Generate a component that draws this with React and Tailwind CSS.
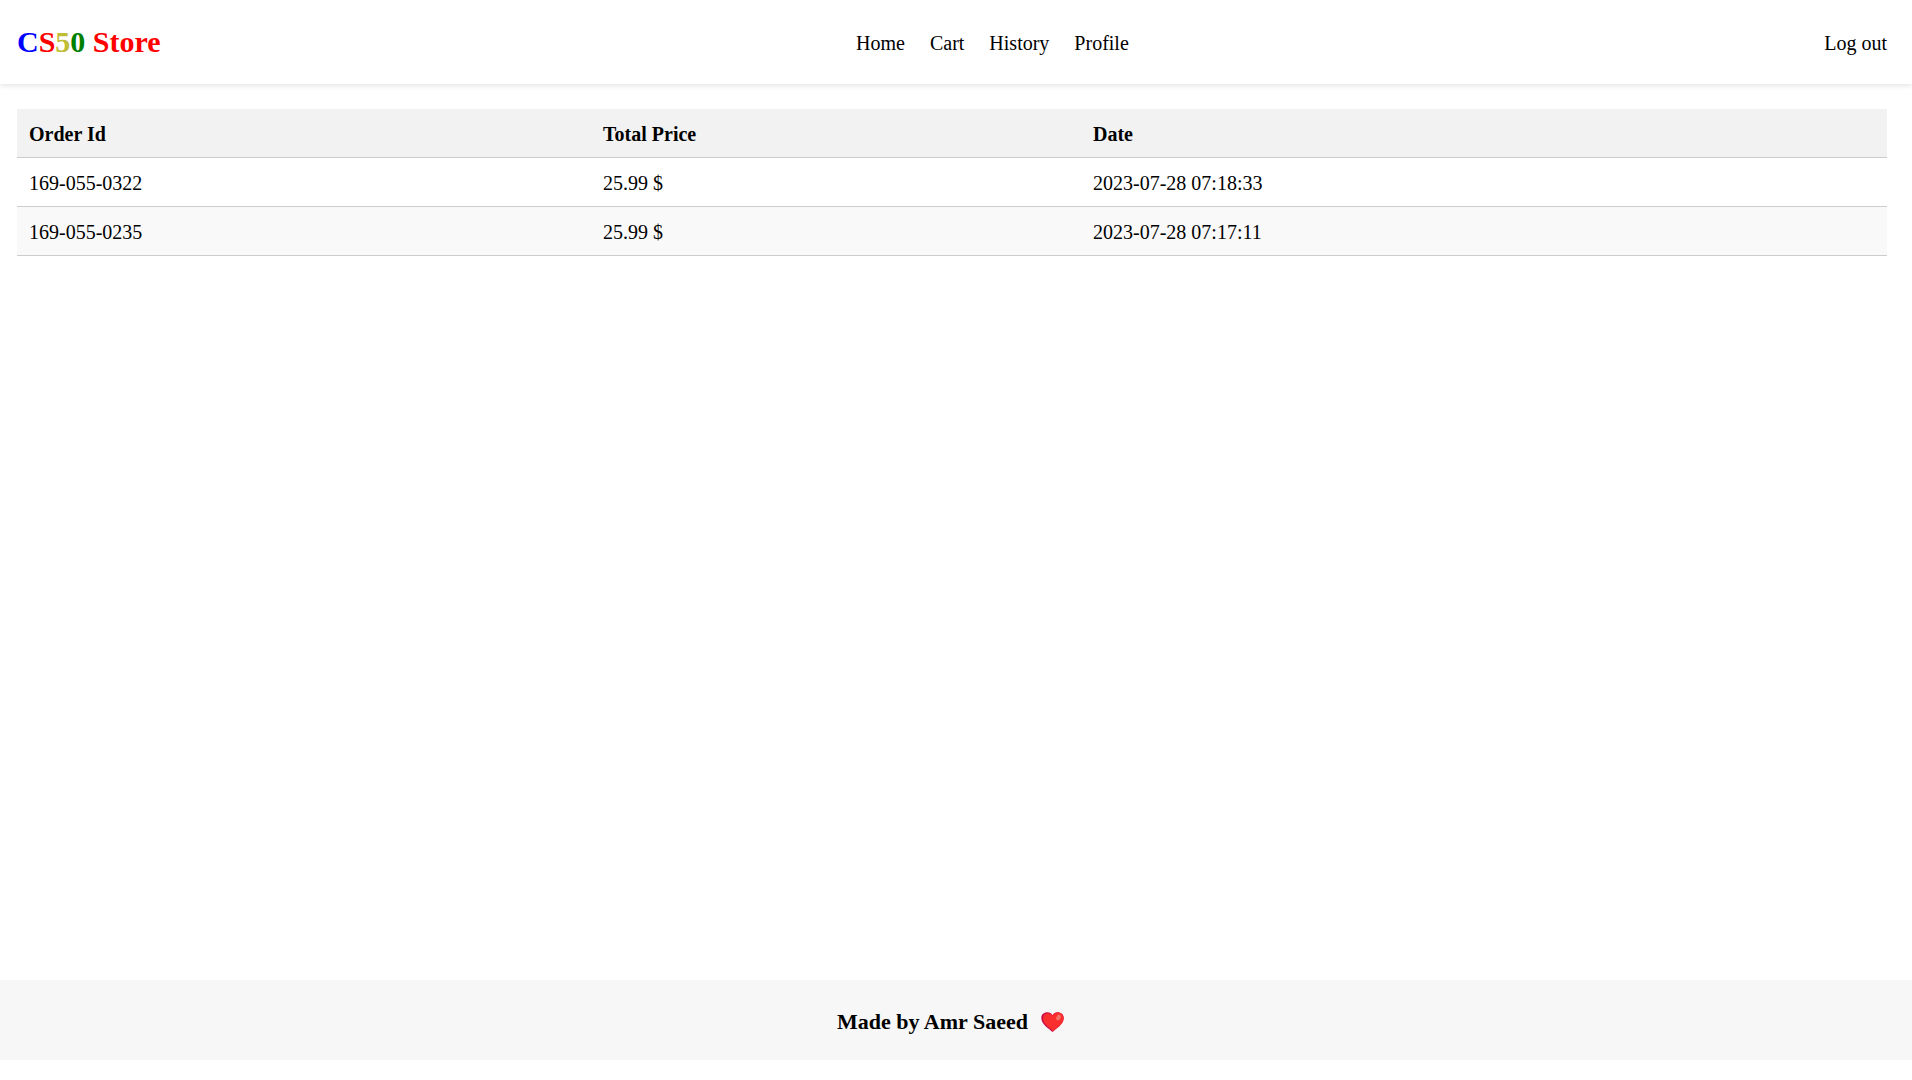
const links = ["Home", "Cart", "History", "Profile"];
const orders = [
  ["169-055-0322", "25.99 $", "2023-07-28 07:18:33"],
  ["169-055-0235", "25.99 $", "2023-07-28 07:17:11"],
];

function Heart() {
  return (
    <svg viewBox="0 0 23 20" className="mr-[11px] h-5 w-[23px]" role="img" aria-label="heart">
      <path d="M11.500 20C8 16.500 0.300 12.500 0.300 6C0.300 2.500 3 0.300 6.300 0.300C8.800 0.300 10.700 1.400 11.500 3.200C12.300 1.400 14.200 0.300 16.700 0.300C20 0.300 22.700 2.500 22.700 6C22.700 12.500 15 16.500 11.500 20Z" fill="#ca0b4a" />
      <path d="M12.200 19.200C8.500 15.500 2 12 2 6.300C2 3.200 4.300 1.300 7 1.300C9.300 1.300 10.800 2.400 11.500 4C12.300 1.600 14.200 0.500 16.700 0.500C20 0.500 22.700 2.700 22.700 6.200C22.700 12.300 15.700 15.700 12.200 19.200Z" fill="#f92f2f" />
      <ellipse cx="17.500" cy="5.500" rx="2" ry="3" transform="rotate(30 17.500 5.500)" fill="#f37366" />
    </svg>
  );
}

export default function App() {
  return (
    <div className="flex min-h-screen flex-col bg-white font-['Liberation_Serif',serif] text-xl text-black">
      <header className="flex h-[84px] items-center justify-between pl-[17px] pr-[25px] pt-px shadow-[0_2px_5px_rgba(0,0,0,0.1)]">
        <a href="#" className="pb-0.5 text-3xl font-bold text-[#ff0000]">
          <span className="text-[#0000ff]">C</span>S<span className="text-[#c1bd37]">5</span>
          <span className="text-[#008000]">0</span> Store
        </a>
        <nav className="flex gap-[25px]">
          {links.map((l) => <a key={l} href="#">{l}</a>)}
        </nav>
        <a href="#">Log out</a>
      </header>
      <main className="grow pl-[17px] pr-[25px] pt-[25px]">
        <table className="w-full border-separate border-spacing-0 text-left">
          <thead>
            <tr className="bg-[#f2f2f2]">
              <th className="h-[49px] w-[30.7%] border-b border-[#cccccc] px-3 pt-0.5">Order Id</th>
              <th className="w-[26.2%] border-b border-[#cccccc] px-3 pt-0.5">Total Price</th>
              <th className="border-b border-[#cccccc] px-3 pt-0.5">Date</th>
            </tr>
          </thead>
          <tbody>
            {orders.map((o) => (
              <tr key={o[0]} className="even:bg-[#f9f9f9]">
                {o.map((c) => <td key={c} className="h-[49px] border-b border-[#cccccc] px-3 pt-0.5">{c}</td>)}
              </tr>
            ))}
          </tbody>
        </table>
      </main>
      <footer className="mb-5 flex h-20 items-center justify-center gap-[13px] bg-[#f7f7f7] pt-1 text-[22px] font-bold">
        <p>Made by Amr Saeed</p>
        <Heart />
      </footer>
    </div>
  );
}
